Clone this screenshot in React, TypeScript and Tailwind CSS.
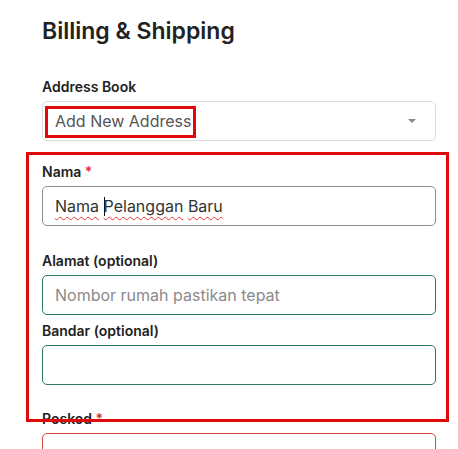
import React from 'react';

function Label({ text, required }: { text: string; required?: boolean }) {
  return (
    <div className="text-[14px] leading-5 font-semibold text-[#222]">
      {text}
      {required && <span className="text-[#d9343a]"> *</span>}
    </div>
  );
}

function Squiggle({ children }: { children: React.ReactNode }) {
  return (
    <span className="underline decoration-wavy decoration-[#e53935] decoration-1 underline-offset-[4px]">
      {children}
    </span>
  );
}

export default function App() {
  return (
    <div
      className="relative w-[458px] h-[449px] overflow-hidden bg-white"
      style={{ fontFamily: 'Inter, "Noto Sans", sans-serif' }}
    >
      <div className="pl-[42px] pr-[22px] pt-[15px]">
        <h1 className="text-[23px] leading-8 font-semibold text-[#222]">Billing &amp; Shipping</h1>

        {/* address book */}
        <div className="mt-[30px]">
          <Label text="Address Book" />
          <div className="relative mt-1 h-10 rounded-[5px] border border-[#dcdcdc] flex items-center px-3">
            <span className="text-[16px] text-[#555]">Add New Address</span>
            <span className="ml-auto mr-[7px] w-0 h-0 border-l-[4px] border-r-[4px] border-t-[4px] border-l-transparent border-r-transparent border-t-[#888]" />
            <div className="absolute left-[2px] top-[4px] w-[151px] h-[32px] border-[3px] border-[#e10a0a]" />
          </div>
        </div>

        {/* nama */}
        <div className="mt-[21px]">
          <Label text="Nama" required />
          <div className="mt-1 h-10 rounded-[5px] border border-[#8f8f8f] flex items-center px-3 text-[16px] text-[#333]">
            <Squiggle>Nama</Squiggle>
            <span>&nbsp;</span>
            <span className="inline-block w-px h-[19px] bg-[#111] -mr-px" />
            <Squiggle>Pelanggan</Squiggle>
            <span>&nbsp;</span>
            <Squiggle>Baru</Squiggle>
          </div>
        </div>

        {/* alamat */}
        <div className="mt-[25px]">
          <Label text="Alamat (optional)" />
          <div className="mt-1 h-10 rounded-[5px] border border-[#2d7a5a] flex items-center px-3 text-[16px] text-[#8a8a8a]">
            Nombor rumah pastikan tepat
          </div>
        </div>

        {/* bandar */}
        <div className="mt-[6px]">
          <Label text="Bandar (optional)" />
          <div className="mt-1 h-10 rounded-[5px] border border-[#2d7a5a]" />
        </div>

        {/* poskod */}
        <div className="mt-[24px]">
          <Label text="Poskod" required />
          <div className="mt-1 h-10 rounded-[5px] border border-[#cf4a3c]" />
        </div>
      </div>

      <div className="absolute left-[26px] top-[152px] w-[423px] h-[270px] border-[3px] border-[#e10a0a]" />
    </div>
  );
}
